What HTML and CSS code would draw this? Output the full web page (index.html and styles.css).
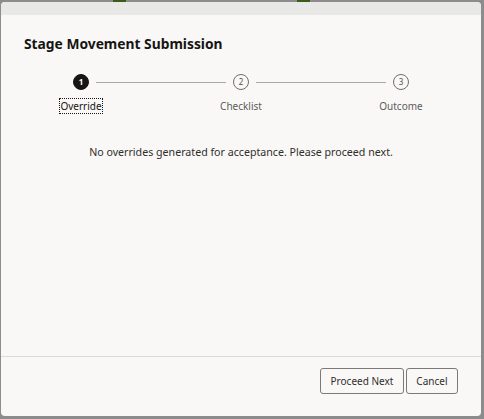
FILE: index.html
```html
<!DOCTYPE html>
<html>
<head>
<meta charset="utf-8">
<link rel="stylesheet" href="styles.css">
</head>
<body>
<div class="topbar"><span class="g g1"></span><span class="g g2"></span></div>
<div class="dialog">
  <div class="band"></div>
  <div class="content">
    <h1 class="title">Stage Movement Submission</h1>
    <div class="stepper">
      <div class="step active">
        <div class="circle">1</div>
        <div class="label"><span class="focus">Override</span></div>
      </div>
      <div class="line"></div>
      <div class="step">
        <div class="circle">2</div>
        <div class="label">Checklist</div>
      </div>
      <div class="line"></div>
      <div class="step">
        <div class="circle">3</div>
        <div class="label">Outcome</div>
      </div>
    </div>
    <p class="message">No overrides generated for acceptance. Please proceed next.</p>
  </div>
  <div class="footer">
    <button class="btn">Proceed Next</button>
    <button class="btn">Cancel</button>
  </div>
</div>
</body>
</html>
```

FILE: styles.css
```css
html, body {
  margin: 0;
  padding: 0;
}
body {
  width: 484px;
  height: 419px;
  background: #8c8c8c;
  font-family: "Noto Sans", "Open Sans", sans-serif;
  overflow: hidden;
  position: relative;
}
.topbar {
  position: absolute;
  top: 0;
  left: 0;
  width: 484px;
  height: 2px;
}
.g {
  position: absolute;
  top: 0;
  height: 2px;
  background: #3d5a1c;
}
.g1 { left: 113px; width: 13px; }
.g2 { left: 297px; width: 13px; }
.dialog {
  margin: 2px 0 0 1px;
  width: 480px;
  height: 414px;
  background: #f9f8f6;
  border-radius: 4px;
  display: flex;
  flex-direction: column;
  overflow: hidden;
}
.band {
  height: 13px;
  background: #e8e8e6;
  flex: none;
}
.content {
  flex: 1;
  padding: 0 23px;
}
.title {
  margin: 19px 0 0 0;
  font-size: 13.8px;
  font-weight: 700;
  color: #161513;
  line-height: 20px;
}
.stepper {
  display: flex;
  align-items: flex-start;
  margin: 20px 0 0 0;
  padding: 0 22px;
}
.step {
  width: 70px;
  display: flex;
  flex-direction: column;
  align-items: center;
  flex: none;
}
.circle {
  width: 16px;
  height: 16px;
  box-sizing: border-box;
  border: 1px solid #6f6e6c;
  border-radius: 50%;
  font-size: 8px;
  line-height: 14px;
  text-align: center;
  color: #4f4e4c;
  background: #f9f8f6;
}
.active .circle {
  background: #161513;
  border-color: #161513;
  color: #fff;
  font-weight: 700;
}
.line {
  flex: 1;
  height: 1px;
  background: #a9a8a6;
  margin: 8px -20px 0;
}
.label {
  margin-top: 9px;
  font-size: 10px;
  line-height: 14px;
  color: #5d5c5a;
}
.active .label {
  color: #161513;
}
.focus {
  outline: 1px dotted #161513;
  outline-offset: 0;
}
.message {
  margin: 31px 0 0 0;
  text-align: center;
  font-size: 10.65px;
  line-height: 16px;
  color: #2f2e2c;
}
.footer {
  flex: none;
  height: 60px;
  border-top: 1px solid #dcdbd9;
  display: flex;
  justify-content: flex-end;
  align-items: flex-start;
  gap: 2px;
  padding: 11px 23px 0 0;
  box-sizing: border-box;
}
.btn {
  height: 26px;
  padding: 0 9.5px;
  border: 1px solid #7b7a78;
  border-radius: 3px;
  background: #f9f8f6;
  font-family: "Noto Sans", "Open Sans", sans-serif;
  font-size: 10px;
  color: #2f2e2c;
}
```
